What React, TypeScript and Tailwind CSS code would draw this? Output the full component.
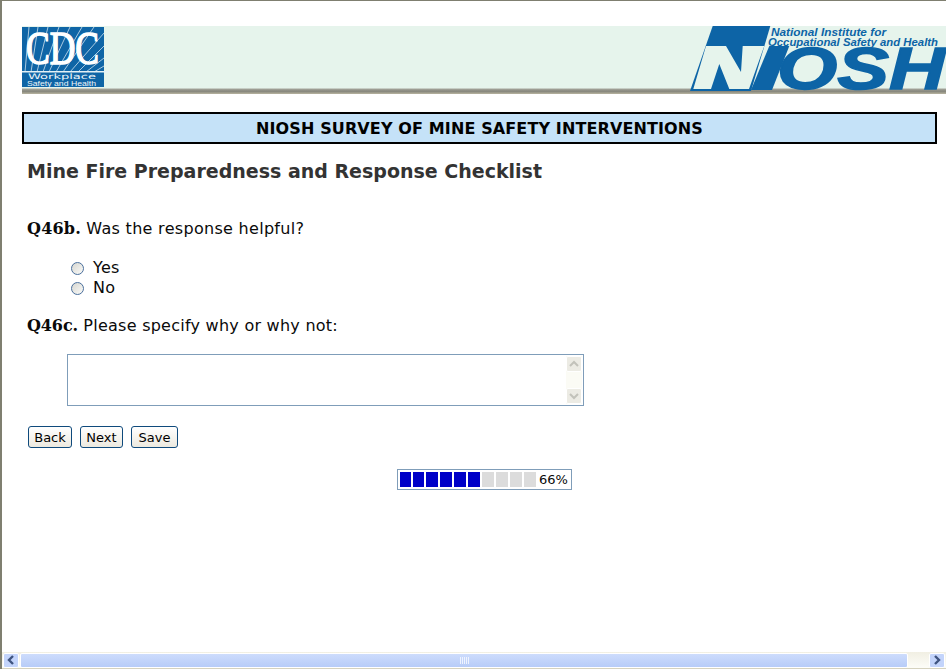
const sans = { fontFamily: '"DejaVu Sans", Verdana, sans-serif' };
const serif = { fontFamily: '"DejaVu Serif", serif' };

const CdcLogo = () => (
  <svg width="88" height="63" viewBox="0 0 88 63" className="shrink-0 block">
    <rect x="0" y="1" width="82" height="60" fill="#0f65a6" />
    <g stroke="#cfe2ef" strokeWidth="0.8">
      <path d="M3 46 L7 1 M9 46 L16 1 M15 46 L26 1 M21 46 L37 1 M27 46 L48 1 M34 46 L60 1 M41 46 L72 1 M48 46 L82 7 M56 46 L82 20 M64 46 L82 32 M72 46 L82 40" />
    </g>
    <text x="4" y="38" fill="#fff" stroke="#fff" strokeWidth="1.6" fontFamily='"Liberation Serif", serif' fontSize="46" textLength="73" lengthAdjust="spacingAndGlyphs">CDC</text>
    <rect x="0" y="45" width="87" height="1.5" fill="#e4f1f6" />
    <text x="6" y="53" fill="#eef5f9" fontFamily='"DejaVu Sans", sans-serif' fontSize="7.5" textLength="68" lengthAdjust="spacingAndGlyphs">Workplace</text>
    <text x="5" y="60" fill="#eef5f9" fontFamily='"Liberation Sans", sans-serif' fontSize="8" textLength="69" lengthAdjust="spacingAndGlyphs">Safety and Health</text>
  </svg>
);

const NioshLogo = () => (
  <svg width="256" height="67" viewBox="0 0 256 67" className="shrink-0 block">
    {/* blue block with the N knocked out of it */}
    <polygon points="22.7,0 80.3,0 61,65 0,65" fill="#0d64a6" />
    <polygon points="16,20 36,20 51,46 52.7,20 74.3,20 59,63 39.3,63 29.3,38 21,63 3.3,63" fill="#e6f4ec" />
    <polygon points="79.3,20 99.3,20 82,64 61,64" fill="#0d64a6" />
    <text x="87" y="63" fill="#0d64a6" stroke="#0d64a6" strokeWidth="1.5" fontFamily='"Liberation Sans", sans-serif' fontWeight="700" fontStyle="italic" fontSize="60" textLength="168" lengthAdjust="spacingAndGlyphs">OSH</text>
    <text x="81" y="10" fill="#0d64a6" fontFamily='"Liberation Sans", sans-serif' fontWeight="700" fontStyle="italic" fontSize="10.5" textLength="115" lengthAdjust="spacingAndGlyphs">National Institute for</text>
    <text x="78" y="19.5" fill="#0d64a6" fontFamily='"Liberation Sans", sans-serif' fontWeight="700" fontStyle="italic" fontSize="10.5" textLength="170" lengthAdjust="spacingAndGlyphs">Occupational Safety and Health</text>
  </svg>
);

const Radio = ({ label }: { label: string }) => (
  <div className="flex items-center h-5">
    <span className="w-[13px] h-[13px] rounded-full border border-[#4a6f9c] bg-gradient-to-br from-[#d6d6d0] to-[#fbfbf9] mr-[9px] ml-[4px]" />
    <span className="tracking-[0.3px]">{label}</span>
  </div>
);

const Btn = ({ label, w }: { label: string; w: string }) => (
  <button className={`${w} h-[22px] border border-[#0f4a7c] rounded-[3px] bg-gradient-to-b from-white to-[#ece9df] text-[13px] leading-none text-black`}>
    {label}
  </button>
);

const Chevron = ({ d, color, width = 2 }: { d: string; color: string; width?: number }) => (
  <svg width="10" height="10" viewBox="0 0 10 10">
    <path d={d} fill="none" stroke={color} strokeWidth={width} />
  </svg>
);

const App = () => {
  const cells = Array.from({ length: 10 }, (_, i) => i < 6);

  return (
    <div className="w-[946px] h-[669px] overflow-hidden flex flex-col bg-white border-t border-l-2 border-[#7f7f70] text-[#0a0a0a]" style={sans}>
      <div className="flex-1 min-h-0 pt-[25px] pl-[20px] flex flex-col">
        <div className="h-[68px] w-[924px] flex justify-between overflow-hidden shrink-0 bg-[linear-gradient(#e6f4ec_0,#e6f4ec_91%,#a0a096_93%,#85857b_96%,#b8b4a0_100%)]">
          <CdcLogo />
          <NioshLogo />
        </div>

        <div className="mt-[18px] w-[915px] h-[32px] border-2 border-black bg-[#c5e2f8] flex items-center justify-center pt-[1px] font-bold text-[16px] tracking-[0.12px] text-black">
          NIOSH SURVEY OF MINE SAFETY INTERVENTIONS
        </div>

        <h1 className="mt-[14px] ml-[5px] text-[19px] leading-[26px] font-bold text-[#333333]">
          Mine Fire Preparedness and Response Checklist
        </h1>

        <p className="mt-[33px] ml-[5px] text-[16px] leading-[24px] tracking-[0.3px]">
          <b className="tracking-[0.2px]" style={serif}>Q46b.</b> Was the response helpful?
        </p>

        <div className="mt-[17px] ml-[45px] text-[16px] flex flex-col">
          <Radio label="Yes" />
          <Radio label="No" />
        </div>

        <p className="mt-[16px] ml-[5px] text-[16px] leading-[24px] tracking-[0.25px]">
          <b className="tracking-[-0.1px]" style={serif}>Q46c.</b> Please specify why or why not:
        </p>

        <div className="mt-[16px] ml-[45px] w-[517px] h-[52px] border border-[#7f9db9] flex bg-white">
          <textarea className="flex-1 resize-none outline-none" readOnly />
          <div className="w-[16px] my-[1px] mr-[1px] flex flex-col justify-between bg-[#fbfbf5]">
            <div className="h-[16px] flex items-center justify-center bg-[#ecebe4] rounded-[2px] border border-white">
              <Chevron d="M1 7 L5 3 L9 7" color="#c2c2ba" />
            </div>
            <div className="h-[16px] flex items-center justify-center bg-[#ecebe4] rounded-[2px] border border-white">
              <Chevron d="M1 3 L5 7 L9 3" color="#c2c2ba" />
            </div>
          </div>
        </div>

        <div className="mt-[20px] ml-[6px] flex gap-[8px]">
          <Btn label="Back" w="w-[44px]" />
          <Btn label="Next" w="w-[43px]" />
          <Btn label="Save" w="w-[47px]" />
        </div>

        <div className="mt-[21px] ml-[375px] w-[175px] h-[21px] border border-[#7f9db9] flex items-center pl-[2px]">
          <div className="flex gap-[2px]">
            {cells.map((on, i) => (
              <span key={i} className={`${i < 2 ? "w-[11px]" : "w-[12px]"} h-[15px] ${on ? "bg-[#0000c8]" : "bg-[#dcdcdc]"}`} />
            ))}
          </div>
          <span className="ml-[3px] text-[13px] leading-none">66%</span>
        </div>
      </div>

      <div className="h-[17px] shrink-0 flex items-center bg-gradient-to-b from-[#f1efe3] to-[#fdfdf8] border-b border-[#d5d2bf] px-[1px]">
        <div className="w-[16px] h-[15px] flex items-center justify-center rounded-[2px] border border-white bg-[#c3d4fb]">
          <Chevron d="M7 1 L3 5 L7 9" color="#3f5480" width={2.4} />
        </div>
        <div className="w-[888px] h-[15px] ml-[1px] flex items-center justify-center rounded-[2px] border border-white bg-gradient-to-b from-[#cddcfc] to-[#b7ccf8]">
          <svg width="9" height="7" viewBox="0 0 9 7">
            <path d="M0.5 0 V7 M2.5 0 V7 M4.5 0 V7 M6.5 0 V7 M8.5 0 V7" stroke="#eef3ff" strokeWidth="1" />
          </svg>
        </div>
        <div className="flex-1" />
        <div className="w-[16px] h-[15px] flex items-center justify-center rounded-[2px] border border-white bg-[#c3d4fb]">
          <Chevron d="M3 1 L7 5 L3 9" color="#3f5480" width={2.4} />
        </div>
      </div>
    </div>
  );
};

export default App;
